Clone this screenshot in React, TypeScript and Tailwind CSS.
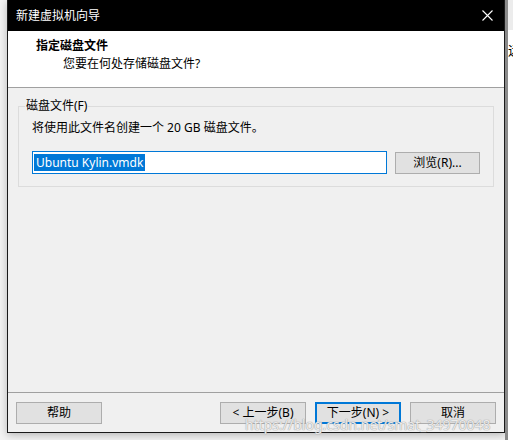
import React from 'react';

const font = { fontFamily: '"Noto Sans", "Noto Sans CJK SC", sans-serif' };

function WinButton({ label, primary = false }: { label: string; primary?: boolean }) {
  return (
    <button
      type="button"
      className={`h-[22px] w-[86px] bg-[#e1e1e1] text-[12px] leading-none text-black ${
        primary ? 'border-2 border-[#0078d7]' : 'border border-[#adadad]'
      }`}
    >
      {label}
    </button>
  );
}

export default function App() {
  return (
    <div className="relative h-[440px] w-[513px] overflow-hidden bg-[#f3f3f3]" style={font}>
      <div className="flex h-full">
        <div className="w-[7px] shrink-0" />

        {/* wizard window */}
        <div className="flex h-[433px] w-[498px] shrink-0 flex-col border-x border-b border-[#1a1a1a] bg-[#f0f0f0] shadow-[0_2px_8px_rgba(0,0,0,0.25)]">
          {/* title bar */}
          <div className="flex h-[31px] items-center justify-between bg-black pl-[8px] pr-[9px] text-white">
            <span className="text-[12px]">新建虚拟机向导</span>
            <svg width="11" height="11" viewBox="0 0 11 11" className="mr-[2px]">
              <path d="M0.5 0.5 L10.5 10.5 M10.5 0.5 L0.5 10.5" stroke="#fff" strokeWidth="1.1" />
            </svg>
          </div>

          {/* header */}
          <div className="h-[57px] border-b border-[#a0a0a0] bg-white pl-[28px] pt-[7px]">
            <div className="text-[12px] font-bold leading-4 text-black">指定磁盘文件</div>
            <div className="mt-[2px] pl-[27px] text-[12px] leading-4 text-black">您要在何处存储磁盘文件?</div>
          </div>

          {/* body */}
          <div className="flex-1 px-[10px] pt-[10px]">
            <fieldset className="border border-[#dcdcdc] px-[13px] pb-[12px]">
              <legend className="ml-[-7px] px-[1px] text-[12px] leading-4 text-black">磁盘文件(F)</legend>
              <div className="mt-[6px] text-[12px] leading-4 text-black">将使用此文件名创建一个 20 GB 磁盘文件。</div>
              <div className="mt-[15px] flex items-center gap-[8px]">
                <div className="flex h-[23px] w-[355px] items-center border border-[#0078d7] bg-white px-[1px]">
                  <span className="bg-[#0078d7] px-[2px] text-[12px] leading-[17px] text-white">Ubuntu Kylin.vmdk</span>
                </div>
                <button
                  type="button"
                  className="h-[22px] w-[85px] border border-[#adadad] bg-[#e1e1e1] text-[12px] leading-none text-black"
                >
                  浏览(R)...
                </button>
              </div>
            </fieldset>
          </div>

          {/* footer */}
          <div className="flex h-[40px] items-start border-t border-[#a0a0a0] px-[8px] pt-[9px]">
            <WinButton label="帮助" />
            <div className="flex-1" />
            <div className="flex gap-[9px]">
              <WinButton label="< 上一步(B)" />
              <WinButton label="下一步(N) >" primary />
              <WinButton label="取消" />
            </div>
          </div>
        </div>

        {/* sliver of the window behind */}
        <div className="flex flex-1 flex-col overflow-hidden border-l-[3px] border-[#8a8a8a] bg-white">
          <div className="h-[30px] bg-[#ececec]" />
          <div className="mt-[12px] text-[13px] leading-4 text-black">远</div>
        </div>
      </div>

      {/* blog watermark */}
      <div
        className="pointer-events-none absolute left-[245px] top-[415px] whitespace-nowrap text-[14px] leading-5 text-white/80"
        style={{ textShadow: '0 0 1px #9a9a9a, 0 0 1px #9a9a9a' }}
      >
        https://blog.csdn.net/smat_34970048
      </div>
    </div>
  );
}
